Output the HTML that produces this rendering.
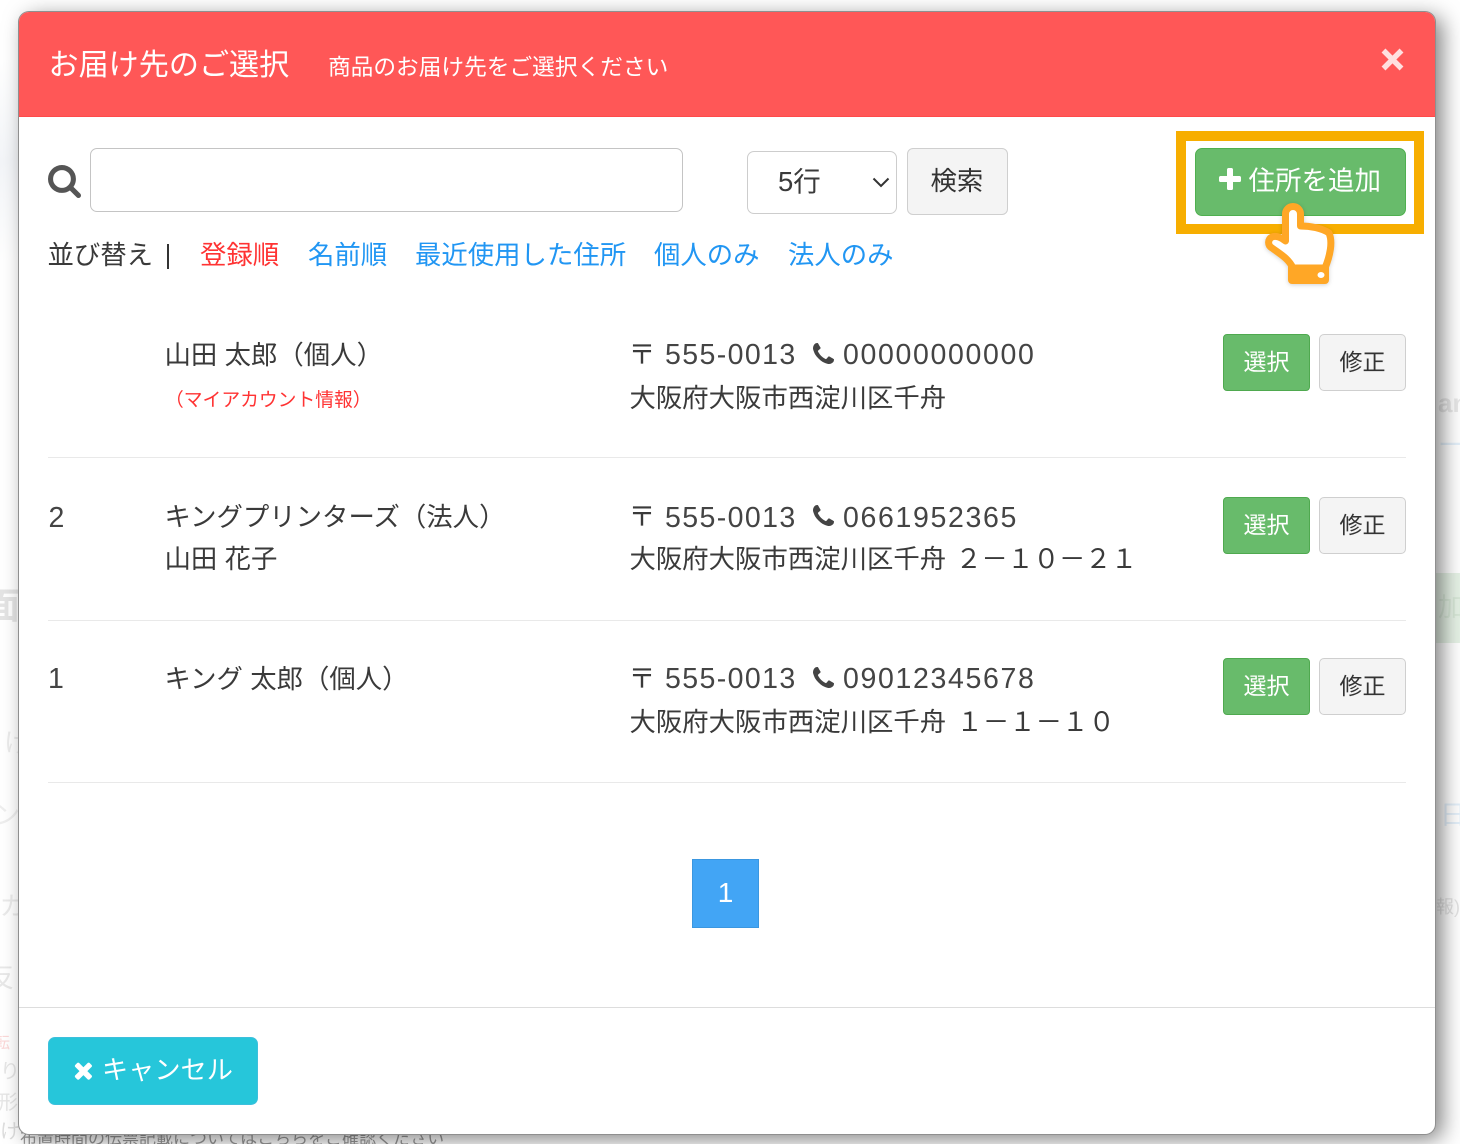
<!DOCTYPE html>
<html lang="ja"><head><meta charset="utf-8"><title>お届け先のご選択</title>
<style>
html,body{margin:0;padding:0;width:1460px;height:1144px;overflow:hidden;background:#fff}
body{position:relative;font-family:"Liberation Sans","Noto Sans CJK JP",sans-serif;color:#3a3a3a}
.t{position:absolute;white-space:nowrap;line-height:1;font-size:26.4px}
.a{position:absolute;box-sizing:border-box}
.bg{position:absolute;white-space:nowrap;line-height:1;color:#e6e6e6;font-size:26px}
.modal{position:absolute;left:19px;top:12px;width:1416px;height:1122px;background:#fff;border-radius:10px;box-shadow:0 0 0 1px #8f8f8f,7px 5px 22px rgba(0,0,0,.5);overflow:hidden}
.head{position:absolute;left:0;top:0;width:100%;height:105px;background:#ff5757;border-bottom:1px solid #ff4a4a;box-sizing:border-box}
.hr{position:absolute;left:48px;width:1358px;height:1px;background:#e9e9e9}
.sel{background:#68bb6b;border:1px solid #4fa94f;border-radius:4px;color:#fff;font-size:23px;line-height:1;display:flex;align-items:center;justify-content:center;width:87px;height:57px;left:1223px}
.fix{background:#f4f4f4;border:1px solid #cfcfcf;border-radius:5px;color:#333;font-size:23px;line-height:1;display:flex;align-items:center;justify-content:center;width:87px;height:57px;left:1319px}
.n{font-size:28.5px;letter-spacing:1.4px;color:#444}
.p{letter-spacing:1.65px}
.z{font-size:27px}
.link{color:#2196f3}
svg{position:absolute;overflow:visible}
</style></head><body>

<div class="a" style="left:0;top:60px;width:19px;height:200px;background:linear-gradient(160deg,#fff,#f3f5f8 50%,#fff)"></div>
<div class="bg" style="left:-16px;top:588px;font-size:36px;color:#e4e4e4;font-weight:700">面</div>
<div class="bg" style="left:4px;top:730px;color:#ececec">け</div>
<div class="bg" style="left:-6px;top:802px;color:#eee">ン</div>
<div class="bg" style="left:0;top:893px;color:#eaeaea">ガ</div>
<div class="bg" style="left:-12px;top:965px;color:#e8e8e8">反</div>
<div class="bg" style="left:-6px;top:1036px;font-size:16px;color:#fbd8d8">転</div>
<div class="bg" style="left:0;top:1062px;font-size:20px">り</div>
<div class="bg" style="left:-2px;top:1093px;font-size:20px">形</div>
<div class="bg" style="left:0;top:1122px;font-size:20px;color:#ddd">け</div>
<div class="bg" style="left:20px;top:1130px;font-size:17px;color:#999">布置時間の伝票記載についてはこちらをご確認ください</div>
<div class="bg" style="left:1438px;top:390px;font-weight:700;color:#e8e8e8">an</div>
<div class="bg" style="left:1438px;top:432px;color:#e4f0fa">ーク</div>
<div class="a" style="left:1436px;top:573px;width:24px;height:70px;background:#e6f2e6"></div>
<div class="bg" style="left:1438px;top:594px;color:#d8e8d8">加</div>
<div class="bg" style="left:1440px;top:730px;font-size:34px;color:#fbdede">（</div>
<div class="bg" style="left:1440px;top:802px;color:#e4f0fa">日</div>
<div class="bg" style="left:1436px;top:898px;font-size:18px;color:#e4e4e4">報)</div>

<div class="modal">
  <div class="head"></div>
  <div class="a" style="left:0;top:995px;width:100%;height:1px;background:#ddd"></div>
</div>

<div class="t" style="left:48.5px;top:50.5px;font-size:30.1px;color:#fff">お届け先のご選択</div>
<div class="t" style="left:328px;top:56px;font-size:22.7px;color:#fff">商品のお届け先をご選択ください</div>
<svg style="left:1380px;top:47px" width="25" height="25" viewBox="0 0 25 25"><path d="M3.5 3.5L21.5 21.5M21.5 3.5L3.5 21.5" stroke="#ffe0e0" stroke-width="5.5" fill="none"/></svg>

<svg style="left:48px;top:165px" width="33" height="33" viewBox="64 128 1664 1664"><path fill="#555" d="M1216 832q0-185-131.5-316.5t-316.5-131.5-316.5 131.5-131.5 316.5 131.5 316.5 316.5 131.5 316.5-131.5 131.5-316.5zm512 832q0 52-38 90t-90 38q-54 0-90-38l-343-342q-179 124-399 124-143 0-273.5-55.5t-225-150-150-225-55.5-273.5 55.5-273.5 150-225 225-150 273.5-55.5 273.5 55.5 225 150 150 225 55.5 273.5q0 220-124 399l343 343q37 37 37 90z"/></svg>
<div class="a" style="left:90px;top:148px;width:593px;height:64px;border:1px solid #c4c4c4;border-radius:7px;background:#fff"></div>

<div class="a" style="left:747px;top:151px;width:150px;height:63px;border:1px solid #cdcdcd;border-radius:7px;background:#fff"></div>
<div class="t" style="left:778px;top:168px;font-size:27.5px">5行</div>
<svg style="left:872px;top:177px" width="18" height="11" viewBox="0 0 18 11"><path d="M1.5 1.5L9 9l7.5-7.5" stroke="#333" stroke-width="2" fill="none"/></svg>
<div class="a" style="left:907px;top:148px;width:101px;height:67px;border:1px solid #cfcfcf;border-radius:6px;background:#f4f4f4"></div>
<div class="t" style="left:930.5px;top:168px;font-size:26.4px;color:#333">検索</div>

<div class="a" style="left:1176px;top:131px;width:248px;height:103px;border:10px solid #f7ae00"></div>
<div class="a" style="left:1195px;top:148px;width:211px;height:68px;background:#68bb6b;border:1px solid #4fb04f;border-radius:7px"></div>
<svg style="left:1219px;top:169px" width="22" height="22" viewBox="192 192 1408 1408"><path fill="#fff" d="M1600 736v192q0 40-28 68t-68 28h-416v416q0 40-28 68t-68 28h-192q-40 0-68-28t-28-68v-416h-416q-40 0-68-28t-28-68v-192q0-40 28-68t68-28h416v-416q0-40 28-68t68-28h192q40 0 68 28t28 68v416h416q40 0 68 28t28 68z"/></svg>
<div class="t" style="left:1248.5px;top:168px;font-size:26.5px;color:#fff">住所を追加</div>

<svg style="left:0;top:0;filter:drop-shadow(0 1px 2px rgba(0,0,0,.18))" width="1460" height="300" viewBox="0 0 1460 300">
  <rect x="1288" y="261" width="41" height="23" rx="4" fill="#ffa726"/>
  <path d="M1285.5 214a7.5 7.5 0 0 1 15 0L1300.5 226C1310 226 1322 228 1329 233C1333 242 1330 256 1325 268L1293 268C1288 258 1280 254 1272 248C1267 245 1268 239 1272 237C1276 235 1282 238 1285.5 241Z" fill="#fff" stroke="#ffa726" stroke-width="7" stroke-linejoin="round"/>
  <ellipse cx="1321" cy="275" rx="3.5" ry="3" fill="#fff"/>
</svg>

<div class="t" style="left:47.5px;top:242px">並び替え</div>
<div class="a" style="left:167px;top:244px;width:1.5px;height:25px;background:#333"></div>
<div class="t" style="left:200px;top:242px;color:#f33">登録順</div>
<div class="t link" style="left:308px;top:242px">名前順</div>
<div class="t link" style="left:415px;top:242px">最近使用した住所</div>
<div class="t link" style="left:654px;top:242px">個人のみ</div>
<div class="t link" style="left:788px;top:242px">法人のみ</div>

<div class="t" style="left:164.5px;top:342px">山田 太郎（個人）</div>
<div class="t" style="left:165px;top:391px;font-size:18.8px;color:#f33">（マイアカウント情報）</div>
<div class="t z" style="left:628.5px;top:342px">〒</div>
<div class="t n" style="left:665px;top:341px">555-0013</div>
<svg style="left:813px;top:343px" width="21" height="21" viewBox="0 0 1408 1408"><path fill="#444" d="M1408 1112q0 27-10 70.5t-21 68.5q-21 50-122 106-94 51-186 51-27 0-53-3.5t-57.5-12.5-47-14.5-55.5-20.5-49-18q-98-35-175-83-127-79-264-216t-216-264q-48-77-83-175-3-9-18-49t-20.5-55.5-14.5-47-12.5-57.5-3.5-53q0-92 51-186 56-101 106-122 25-11 68.5-21t70.5-10q14 0 21 3 18 6 53 76 11 19 30 54t35 63.5 31 53.5q3 4 17.5 25t21.5 35.5 7 28.5q0 20-28.5 50t-62 55-62 53-28.5 46q0 9 5 22.5t8.5 20.5 14 24 11.5 19q76 137 174 235t235 174q2 1 19 11.5t24 14 20.5 8.5 22.5 5q18 0 46-28.5t53-62 55-62 50-28.5q14 0 28.5 7t35.5 21.5 25 17.5q25 15 53.5 31t63.5 35 54 30q70 35 76 53 3 7 3 21z"/></svg>
<div class="t n p" style="left:843px;top:341px">00000000000</div>
<div class="t" style="left:629.5px;top:385px">大阪府大阪市西淀川区千舟</div>
<div class="a sel" style="top:334px">選択</div>
<div class="a fix" style="top:334px">修正</div>
<div class="hr" style="top:457px"></div>

<div class="t n" style="left:48.5px;top:503.5px">2</div>
<div class="t" style="left:164.5px;top:504px">キングプリンターズ（法人）</div>
<div class="t" style="left:164.5px;top:546px">山田 花子</div>
<div class="t z" style="left:628.5px;top:504px">〒</div>
<div class="t n" style="left:665px;top:503.5px">555-0013</div>
<svg style="left:813px;top:505px" width="21" height="21" viewBox="0 0 1408 1408"><path fill="#444" d="M1408 1112q0 27-10 70.5t-21 68.5q-21 50-122 106-94 51-186 51-27 0-53-3.5t-57.5-12.5-47-14.5-55.5-20.5-49-18q-98-35-175-83-127-79-264-216t-216-264q-48-77-83-175-3-9-18-49t-20.5-55.5-14.5-47-12.5-57.5-3.5-53q0-92 51-186 56-101 106-122 25-11 68.5-21t70.5-10q14 0 21 3 18 6 53 76 11 19 30 54t35 63.5 31 53.5q3 4 17.5 25t21.5 35.5 7 28.5q0 20-28.5 50t-62 55-62 53-28.5 46q0 9 5 22.5t8.5 20.5 14 24 11.5 19q76 137 174 235t235 174q2 1 19 11.5t24 14 20.5 8.5 22.5 5q18 0 46-28.5t53-62 55-62 50-28.5q14 0 28.5 7t35.5 21.5 25 17.5q25 15 53.5 31t63.5 35 54 30q70 35 76 53 3 7 3 21z"/></svg>
<div class="t n p" style="left:843px;top:503.5px">0661952365</div>
<div class="t" style="left:629.5px;top:546px">大阪府大阪市西淀川区千舟</div>
<div class="t" style="left:955.5px;top:546px;letter-spacing:-.5px">２－１０－２１</div>
<div class="a sel" style="top:497px">選択</div>
<div class="a fix" style="top:497px">修正</div>
<div class="hr" style="top:620px"></div>

<div class="t n" style="left:48px;top:665px">1</div>
<div class="t" style="left:164.5px;top:666px">キング 太郎（個人）</div>
<div class="t z" style="left:628.5px;top:666px">〒</div>
<div class="t n" style="left:665px;top:665px">555-0013</div>
<svg style="left:813px;top:667px" width="21" height="21" viewBox="0 0 1408 1408"><path fill="#444" d="M1408 1112q0 27-10 70.5t-21 68.5q-21 50-122 106-94 51-186 51-27 0-53-3.5t-57.5-12.5-47-14.5-55.5-20.5-49-18q-98-35-175-83-127-79-264-216t-216-264q-48-77-83-175-3-9-18-49t-20.5-55.5-14.5-47-12.5-57.5-3.5-53q0-92 51-186 56-101 106-122 25-11 68.5-21t70.5-10q14 0 21 3 18 6 53 76 11 19 30 54t35 63.5 31 53.5q3 4 17.5 25t21.5 35.5 7 28.5q0 20-28.5 50t-62 55-62 53-28.5 46q0 9 5 22.5t8.5 20.5 14 24 11.5 19q76 137 174 235t235 174q2 1 19 11.5t24 14 20.5 8.5 22.5 5q18 0 46-28.5t53-62 55-62 50-28.5q14 0 28.5 7t35.5 21.5 25 17.5q25 15 53.5 31t63.5 35 54 30q70 35 76 53 3 7 3 21z"/></svg>
<div class="t n p" style="left:843px;top:665px">09012345678</div>
<div class="t" style="left:629.5px;top:709px">大阪府大阪市西淀川区千舟</div>
<div class="t" style="left:956.5px;top:709px">１－１－１０</div>
<div class="a sel" style="top:658px">選択</div>
<div class="a fix" style="top:658px">修正</div>
<div class="hr" style="top:782px"></div>

<div class="a" style="left:692px;top:859px;width:67px;height:69px;background:#42a5f5;border:1px solid #3b97e0;color:#fff;font-size:28px;line-height:66px;text-align:center">1</div>

<div class="a" style="left:48px;top:1037px;width:210px;height:68px;background:#26c6da;border-radius:7px;border:1px solid #3dbfdc"></div>
<svg style="left:73px;top:1061px" width="19" height="19" viewBox="176 256 1314 1314"><path fill="#fff" d="M1490 1322q0 40-28 68l-136 136q-28 28-68 28t-68-28l-294-294-294 294q-28 28-68 28t-68-28l-136-136q-28-28-28-68t28-68l294-294-294-294q-28-28-28-68t28-68l136-136q28-28 68-28t68 28l294 294 294-294q28-28 68-28t68 28l136 136q28 28 28 68t-28 68l-294 294 294 294q28 28 28 68z"/></svg>
<div class="t" style="left:102px;top:1057px;font-size:26.2px;color:#fff">キャンセル</div>
</body></html>
